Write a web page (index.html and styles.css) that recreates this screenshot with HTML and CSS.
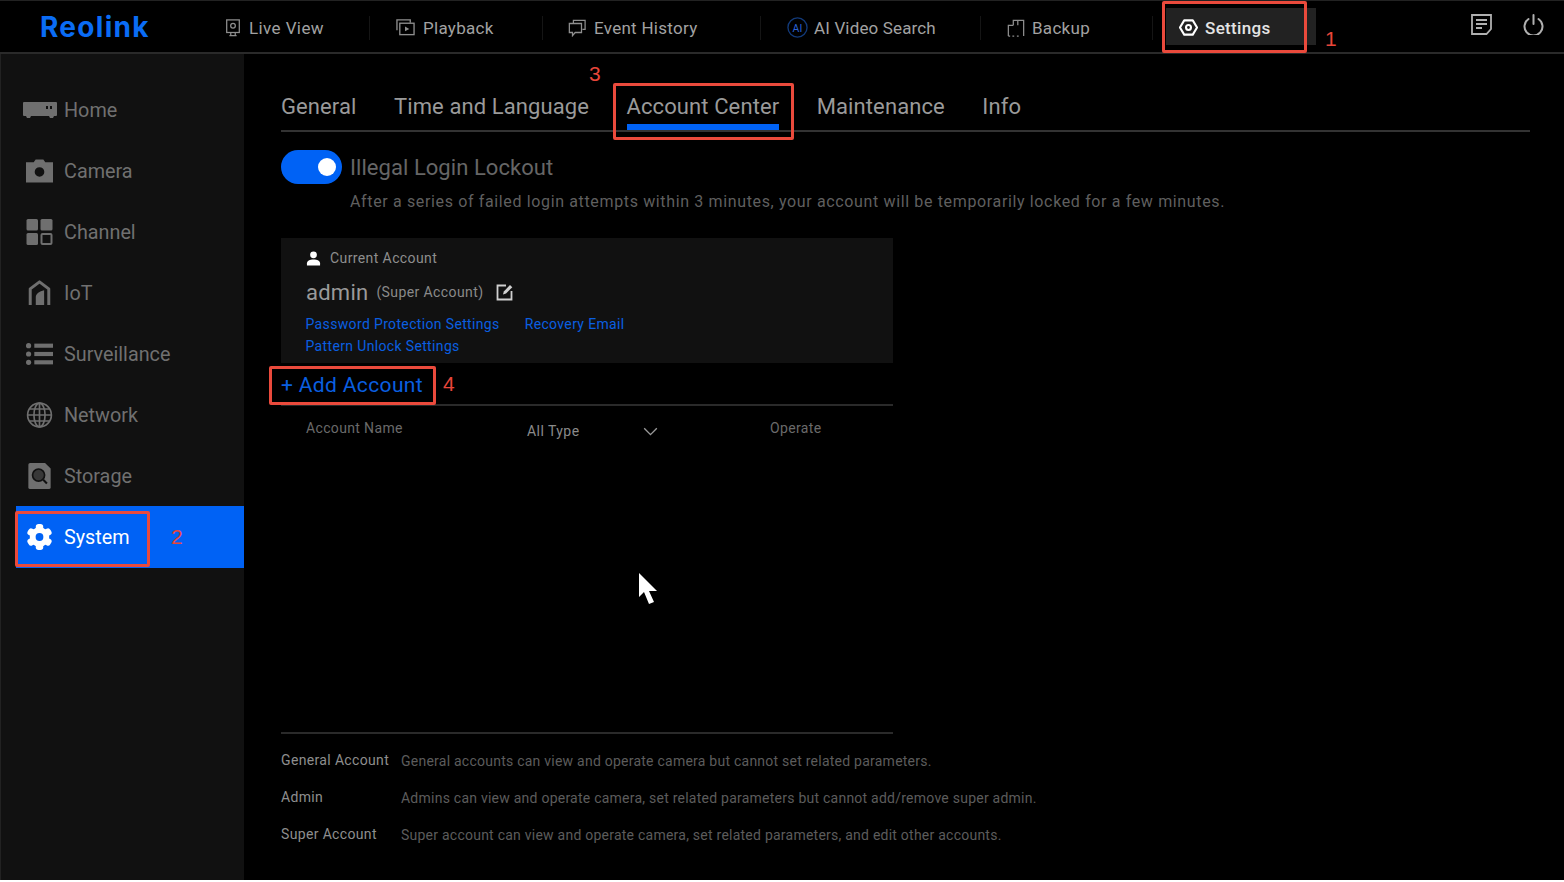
FILE: index.html
```html
<!DOCTYPE html>
<html lang="en">
<head>
<meta charset="utf-8">
<title>Reolink Settings</title>
<link rel="stylesheet" href="styles.css">
</head>
<body>
<div class="app">
  <header class="topbar">
    <div class="logo">Reolink</div>
    <nav class="topnav">
      <a class="tn tn-live">
        <svg class="tn-ic" viewBox="0 0 20 20" fill="none" stroke="currentColor" stroke-width="1.4"><rect x="3" y="1" width="14" height="14"/><circle cx="10" cy="7.500" r="2.600"/><path d="M6 18.500h8M7.500 15v3.500M12.500 15v3.500"/></svg>
        <span>Live View</span>
      </a>
      <a class="tn tn-play">
        <svg class="tn-ic" viewBox="0 0 20 20" fill="none" stroke="currentColor" stroke-width="1.4"><path d="M1 13V2h14v3"/><rect x="4" y="5.500" width="15" height="12"/><path d="M9.500 9v5l4.500-2.500z" fill="currentColor" stroke="none"/></svg>
        <span>Playback</span>
      </a>
      <a class="tn tn-event">
        <svg class="tn-ic" viewBox="0 0 20 20" fill="none" stroke="currentColor" stroke-width="1.4"><path d="M6 5V1.500h13v10h-3"/><path d="M1.500 5h13.500v10H8l-3 3.500V15H1.500z"/></svg>
        <span>Event History</span>
      </a>
      <a class="tn tn-ai">
        <svg class="tn-ic tn-ic-ai" viewBox="0 0 22 22" fill="none"><circle cx="11" cy="11" r="10" stroke="#123a7a" stroke-width="1.400"/><text x="11" y="15.500" text-anchor="middle" class="ai-text">AI</text></svg>
        <span>AI Video Search</span>
      </a>
      <a class="tn tn-backup">
        <svg class="tn-ic" viewBox="0 0 20 20" fill="none" stroke="currentColor" stroke-width="1.4"><path d="M7 7V1.500h11.500V19"/><path d="M7 7H1.500v12M1.500 19h2M6 19h2M11 19h2"/><path d="M12 1.500V7"/></svg>
        <span>Backup</span>
      </a>
      <a class="tn-settings">
        <svg class="set-ic" viewBox="0 0 20 20" fill="none" stroke="#fff" stroke-width="2.200"><path d="M5.500 2.500h9L19 10l-4.500 7.500h-9L1 10z" stroke-linejoin="round"/><circle cx="10" cy="10" r="2.600"/></svg>
        <span>Settings</span>
      </a>
    </nav>
    <div class="top-right">
      <svg class="tr-ic" viewBox="0 0 21 21" fill="none" stroke="#b0b0b0" stroke-width="1.800"><path d="M1 1h19v14l-4.500 5H1z"/><path d="M5 6h11M5 10h11M5 14h6"/></svg>
      <svg class="tr-ic" viewBox="0 0 21 21" fill="none" stroke="#b0b0b0" stroke-width="2" stroke-linecap="round"><path d="M5.500 5a9 9 0 1 0 10 0"/><path d="M10.500 1v9"/></svg>
    </div>
  </header>

  <div class="body-row">
    <aside class="sidebar">
      <a class="side">
        <svg class="side-ic side-ic-wide" viewBox="0 0 34 16"><path fill-rule="evenodd" fill="#6f6f6f" d="M1 0h32a1 1 0 0 1 1 1v12a1 1 0 0 1-1 1h-2l-1 2h-3l-1-2H8l-1 2H4l-1-2H1a1 1 0 0 1-1-1V1a1 1 0 0 1 1-1zM23 4v3h2V4zm4 0v3h2V4z"/></svg>
        <span>Home</span>
      </a>
      <a class="side">
        <svg class="side-ic" viewBox="0 0 28 24"><path fill-rule="evenodd" fill="#6f6f6f" d="M0 3h8l2-3h8l2 3h8v21H0zM14 8a5 5 0 1 0 0 10 5 5 0 0 0 0-10z"/></svg>
        <span>Camera</span>
      </a>
      <a class="side">
        <svg class="side-ic" viewBox="0 0 26 26"><g fill="#6f6f6f"><rect width="11.500" height="11.500" rx="1.500"/><rect x="14" width="12" height="11.500" rx="1.500"/><rect y="14" width="11.500" height="12" rx="1.500"/></g><rect x="15" y="15" width="10" height="10" rx="1" fill="none" stroke="#6f6f6f" stroke-width="2"/></svg>
        <span>Channel</span>
      </a>
      <a class="side">
        <svg class="side-ic" viewBox="0 0 24 28" fill="none"><path d="M2 27V9.500L12 2l10 7.500V27" stroke="#6f6f6f" stroke-width="3.200" stroke-linejoin="round"/><path d="M8 27V18c0-3 4-6 9-7v16z" fill="#6f6f6f"/></svg>
        <span>IoT</span>
      </a>
      <a class="side">
        <svg class="side-ic" viewBox="0 0 26 22"><g fill="#6f6f6f"><circle cx="2.500" cy="3" r="2.500"/><circle cx="2.500" cy="11" r="2.500"/><circle cx="2.500" cy="19" r="2.500"/><rect x="8" y="1" width="18" height="4"/><rect x="8" y="9" width="18" height="4"/><rect x="8" y="17" width="18" height="4"/></g></svg>
        <span>Surveillance</span>
      </a>
      <a class="side">
        <svg class="side-ic" viewBox="0 0 28 28" fill="none" stroke="#6f6f6f" stroke-width="1.800"><circle cx="14" cy="14" r="12.800"/><ellipse cx="14" cy="14" rx="6" ry="12.800"/><path d="M14 1v26M1.500 14h25M3.500 7.500h21M3.500 20.500h21"/></svg>
        <span>Network</span>
      </a>
      <a class="side">
        <svg class="side-ic" viewBox="0 0 24 28"><path fill="#6f6f6f" d="M2 0h16l6 6v20a2 2 0 0 1-2 2H2a2 2 0 0 1-2-2V2a2 2 0 0 1 2-2z"/><circle cx="11" cy="13" r="6.500" fill="#383838" stroke="#111" stroke-width="1.800"/><path d="M16 18l4 4" stroke="#111" stroke-width="2.200"/></svg>
        <span>Storage</span>
      </a>
      <a class="side side-on">
        <svg class="side-ic" viewBox="0 0 28 28"><g fill="#fff"><circle cx="14" cy="14" r="10.500"/><rect x="10" y="0" width="8" height="28" rx="3"/><rect x="10" y="0" width="8" height="28" rx="3" transform="rotate(60 14 14)"/><rect x="10" y="0" width="8" height="28" rx="3" transform="rotate(120 14 14)"/></g><circle cx="14" cy="14" r="4.200" fill="#0062f5"/></svg>
        <span>System</span>
      </a>
    </aside>

    <main class="content">
      <div class="tabs">
        <a class="tab">General</a>
        <a class="tab">Time and Language</a>
        <a class="tab tab-on">Account Center</a>
        <a class="tab">Maintenance</a>
        <a class="tab">Info</a>
      </div>

      <div class="lockout">
        <div class="switch"><i class="knob"></i></div>
        <div class="lock-text">
          <div class="lock-title">Illegal Login Lockout</div>
          <div class="lock-desc">After a series of failed login attempts within 3 minutes, your account will be temporarily locked for a few minutes.</div>
        </div>
      </div>

      <div class="acct-col">
        <section class="current">
          <div class="cur-head">
            <svg class="user-ic" viewBox="0 0 16 16"><circle cx="8" cy="4" r="3.600" fill="#fff"/><path d="M1 15.500v-2.500c0-2.500 3-4 7-4s7 1.500 7 4v2.500z" fill="#fff"/></svg>
            <span>Current Account</span>
          </div>
          <div class="cur-name">
            <span class="name">admin</span>
            <span class="role">(Super Account)</span>
            <svg class="edit-ic" viewBox="0 0 18 18" fill="none"><path d="M10 2.500H1.500v14h14V8" stroke="#d0d0d0" stroke-width="1.800"/><path d="M7 11.500l.8-3L14 2l2.300 2.300L10 10.500z" fill="#d0d0d0"/></svg>
          </div>
          <div class="links">
            <a class="link">Password Protection Settings</a>
            <a class="link">Recovery Email</a>
            <a class="link">Pattern Unlock Settings</a>
          </div>
        </section>

        <div class="add-row"><a class="add">+ Add Account</a></div>

        <div class="table-head">
          <span class="th th-name">Account Name</span>
          <span class="th-type"><span>All Type</span>
            <svg class="chev" viewBox="0 0 16 10" fill="none" stroke="#9a9a9a" stroke-width="1.500"><path d="M1 1.500l7 7 7-7"/></svg>
          </span>
          <span class="th th-op">Operate</span>
        </div>
        <div class="table-body"></div>
      </div>

      <dl class="legend">
        <div class="lg"><dt>General Account</dt><dd>General accounts can view and operate camera but cannot set related parameters.</dd></div>
        <div class="lg"><dt>Admin</dt><dd>Admins can view and operate camera, set related parameters but cannot add/remove super admin.</dd></div>
        <div class="lg"><dt>Super Account</dt><dd>Super account can view and operate camera, set related parameters, and edit other accounts.</dd></div>
      </dl>
    </main>
  </div>

  <svg class="cursor" viewBox="0 0 20 32"><path fill="#fff" d="M1 0v24l5-5 5 12 5-2-5-11h8z"/></svg>

  <i class="mark mark-1"></i><b class="num num-1">1</b>
  <i class="mark mark-2"></i><b class="num num-2">2</b>
  <i class="mark mark-3"></i><b class="num num-3">3</b>
  <i class="mark mark-4"></i><b class="num num-4">4</b>
</div>
</body>
</html>
```
FILE: styles.css
```css
* { box-sizing: border-box; }
html, body { margin: 0; padding: 0; background: #fff; }
body { font-family: Roboto, "Liberation Sans", sans-serif; }
a { display: block; }

.app { position: relative; width: 1564px; height: 880px; background: #000; display: flex; flex-direction: column; overflow: hidden; }

/* top bar */
.topbar { height: 54px; flex: none; display: flex; align-items: center; border-top: 1px solid #222; border-bottom: 2px solid #2a2a2a; }
.logo { width: 195px; padding-left: 40px; font-family: Inter, Roboto, sans-serif; font-size: 28px; font-weight: 700; color: #0a6cf5; letter-spacing: 1.300px; }
.topnav { display: flex; align-items: center; height: 100%; }
.tn { display: flex; align-items: center; gap: 8px; height: 24px; margin-top: 2px; color: #8e8e8e; font-size: 17px; letter-spacing: 0.28px; border-right: 1px solid #151515; padding-left: 26px; }
.tn span { color: #a2a2a2; }
.tn-live { width: 175px; padding-left: 29px; gap: 7px; letter-spacing: 0.4px; }
.tn-play { width: 173px; gap: 8px; }
.tn-play .tn-ic { width: 19px; height: 19px; }
.tn-event { width: 218px; gap: 8px; padding-left: 25px; }
.tn-ai { width: 220px; gap: 6px; letter-spacing: 0.15px; }
.tn-backup { width: 172px; gap: 7px; }
.tn-ic { width: 18px; height: 18px; flex: none; }
.tn-ic-ai { width: 21px; height: 21px; }
.ai-text { font-size: 11px; fill: #2a63d8; font-family: Roboto, sans-serif; }
.tn-settings { display: flex; align-items: center; gap: 7px; width: 150px; height: 37px; margin-left: 13px; padding: 2px 0 0 13px; background: #222; color: #e4e4e4; font-size: 17px; font-weight: 500; letter-spacing: 0.35px; }
.set-ic { width: 19px; height: 19px; flex: none; }
.top-right { margin-left: auto; display: flex; gap: 31px; padding-right: 20px; margin-top: -5px; }
.tr-ic { width: 21px; height: 21px; }

/* layout */
.body-row { flex: 1; display: flex; min-height: 0; }

/* sidebar */
.sidebar { width: 244px; flex: none; background: #111; border-left: 1px solid #222; padding-top: 25px; padding-left: 15px; display: flex; flex-direction: column; }
.side { display: flex; align-items: center; height: 61px; padding-top: 1px; color: #707070; font-size: 19.800px; letter-spacing: 0; }
.side span { margin-left: 48px; }
.side-ic { width: 27px; height: 26px; flex: none; margin-left: 10px; margin-right: -37px; }
.side-ic-wide { width: 34px; height: 16px; margin-left: 7px; margin-right: -41px; }
.side-on { background: #0062f5; color: #fff; height: 62px; padding-top: 0; }

/* content */
.content { flex: 1; min-width: 0; padding: 0 34px 0 37px; display: flex; flex-direction: column; }
.tabs { display: flex; gap: 37.500px; height: 78px; padding-top: 38px; border-bottom: 2px solid #333; }
.tab { font-size: 22px; height: 38px; line-height: 30px; color: #9a9a9a; letter-spacing: 0.1px; }
.tab-on { border-bottom: 6px solid #0062f5; }

.lockout { display: flex; margin-top: 18px; gap: 8px; }
.switch { width: 61px; height: 34px; border-radius: 17px; background: #0062f5; display: flex; align-items: center; justify-content: flex-end; padding-right: 6px; flex: none; }
.knob { width: 18px; height: 18px; border-radius: 50%; background: #fff; }
.lock-title { font-size: 22px; line-height: 36px; color: #666; letter-spacing: 0.05px; }
.lock-desc { font-size: 16px; line-height: 20px; margin-top: 6px; color: #5f5f5f; letter-spacing: 0.64px; }

.acct-col { width: 612px; margin-top: 26px; display: flex; flex-direction: column; }
.current { height: 125px; background: #111; padding: 10px 0 0 25px; }
.cur-head { display: flex; align-items: center; gap: 9px; font-size: 14px; color: #8e8e8e; height: 20px; letter-spacing: 0.4px; }
.user-ic { width: 15px; height: 15px; }
.cur-name { display: flex; align-items: center; margin-top: 11px; height: 26px; }
.name { font-size: 22px; color: #9a9a9a; letter-spacing: 0.25px; }
.role { font-size: 14px; color: #8a8a8a; margin-left: 8px; letter-spacing: 0.4px; }
.edit-ic { width: 18px; height: 18px; margin-left: 13px; }
.links { display: flex; flex-wrap: wrap; column-gap: 25px; margin-top: 8px; width: 400px; margin-left: -0.500px; }
.link { font-size: 14px; line-height: 22px; color: #0a5fe0; letter-spacing: 0.35px; }

.add-row { height: 43px; border-bottom: 2px solid #2a2a2a; display: flex; align-items: center; padding-top: 2px; }
.add { font-size: 21px; color: #0a5fe0; letter-spacing: 0.35px; }

.table-head { display: flex; height: 46px; color: #6a6a6a; position: relative; }
.th { font-size: 14px; letter-spacing: 0.35px; padding-top: 14px; }
.th-name { width: 246px; padding-left: 25px; }
.th-type { width: 243px; display: flex; align-items: center; height: 50px; padding-top: 0; font-size: 14px; color: #8a8a8a; letter-spacing: 0.45px; gap: 63px; }
.chev { width: 15px; height: 9px; }
.table-body { height: 282px; border-bottom: 2px solid #2a2a2a; margin-top: 0; }

.legend { margin: 14px 0 0; }
.lg { display: flex; height: 37px; align-items: flex-start; }
.lg dt { width: 120px; font-size: 14px; line-height: 24px; color: #8e8e8e; letter-spacing: 0.35px; flex: none; }
.lg dd { margin: 0; font-size: 14px; line-height: 26px; color: #5c5c5c; letter-spacing: 0.24px; }

/* overlays */
.cursor { position: absolute; left: 638px; top: 573px; width: 20px; height: 32px; }
.mark { position: absolute; border: 3px solid #ea4a3c; border-radius: 2px; }
.mark-1 { left: 1162px; top: 1px; width: 145px; height: 52px; }
.mark-2 { left: 15px; top: 511px; width: 135px; height: 56px; }
.mark-3 { left: 613px; top: 83px; width: 181px; height: 57px; }
.mark-4 { left: 269px; top: 366px; width: 167px; height: 39px; }
.num { position: absolute; font-family: "Liberation Sans", sans-serif; font-weight: 400; font-size: 21px; line-height: 24px; color: #e8463a; }
.num-1 { left: 1325px; top: 27px; }
.num-2 { left: 171px; top: 525px; }
.num-3 { left: 589px; top: 62px; }
.num-4 { left: 443px; top: 372px; }
```
